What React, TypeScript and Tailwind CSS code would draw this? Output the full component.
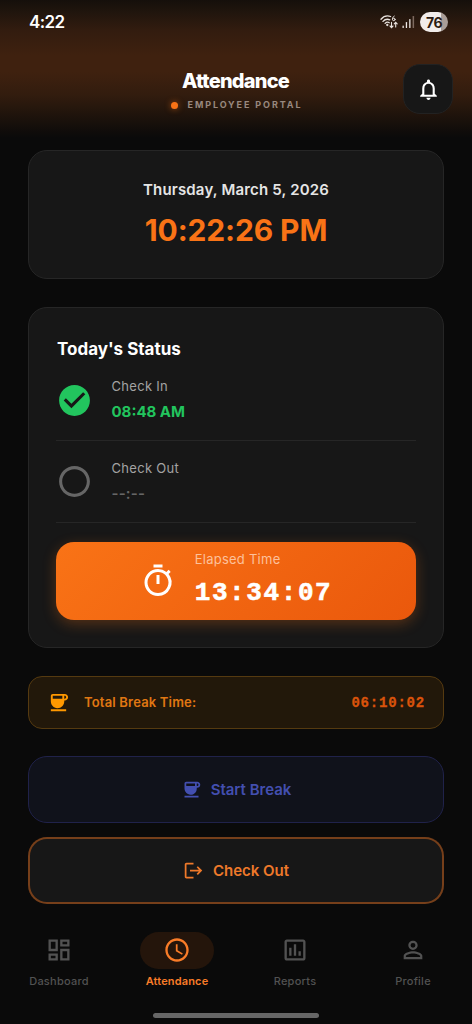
import React from 'react';
import type { IconType } from 'react-icons';
import {
  MdAccessTime,
  MdCheckCircle,
  MdCoffee,
  MdLogout,
  MdNotificationsNone,
  MdOutlineAssessment,
  MdOutlineDashboard,
  MdOutlineTimer,
  MdPersonOutline,
  MdRadioButtonUnchecked,
} from 'react-icons/md';

interface NavItem {
  label: string;
  icon: IconType;
  active?: boolean;
}

const NAV_ITEMS: NavItem[] = [
  { label: 'Dashboard', icon: MdOutlineDashboard },
  { label: 'Attendance', icon: MdAccessTime, active: true },
  { label: 'Reports', icon: MdOutlineAssessment },
  { label: 'Profile', icon: MdPersonOutline },
];

const StatusBar: React.FC = () => (
  <div className="flex h-11 items-center justify-between pl-[29px] pr-6">
    <span className="pt-0.5 text-[17px] font-semibold tracking-[-0.6px] text-white">4:22</span>
    <div className="flex items-center">
      {/* Wi-Fi 6 with traffic arrows */}
      <svg width="18" height="14" viewBox="0 0 18 14" fill="none" stroke="#e8e2de" strokeWidth="1.3" strokeLinecap="round">
        <path d="M1 4.2C3.6 1.2 7.4.4 10.6 1.5" />
        <path d="M3 6.4c1.8-2 4.4-2.6 6.8-1.6" />
        <path d="M5.1 8.4c1.2-1.2 2.8-1.5 4.2-.7" />
        <circle cx="7.3" cy="10" r=".5" />
        <path strokeWidth="1" d="M14.2 1.1c-1.2.6-1.8 1.7-1.8 3" />
        <circle strokeWidth="1" cx="13.8" cy="4.4" r="1.3" />
        <path strokeWidth="1.1" d="M11.5 7.4v5M10 11l1.5 1.6L13 11M15.7 12V7.4m-1.5 1.5 1.5-1.6 1.5 1.6" />
      </svg>
      <svg className="ml-1 mr-[5px]" width="13" height="14" viewBox="0 0 13 14">
        <rect x="0.5" y="10.5" width="1.3" height="2.5" rx=".6" fill="#eee8e4" />
        <rect x="3.8" y="7" width="1.3" height="6" rx=".6" fill="#eee8e4" />
        <rect x="7.2" y="4" width="1.3" height="9" rx=".6" fill="#eee8e4" />
        <rect x="10.6" y="1" width="1.5" height="12" rx=".6" fill="#7d6a5f" />
      </svg>
      <div className="flex h-5 w-7 items-center justify-center rounded-full bg-linear-to-r from-[#f1ecea] from-75% to-[#a99d97] to-75% text-[14px] font-bold tracking-[-0.4px] text-[#2b1a10]">
        76
      </div>
    </div>
  </div>
);

const Header: React.FC = () => (
  <header className="h-[138px] bg-[linear-gradient(to_bottom,#150f0b_0px,#20150d_12px,#321c0f_30px,#3f210f_55px,#3f210f_72px,#321c0e_95px,#20140c_114px,#0f0c0a_132px,#0a0a0a_138px)]">
    <StatusBar />
    <div className="grid grid-cols-[68px_1fr_69px] items-start pt-5">
      <div />
      <div className="flex flex-col items-center pt-[5px]">
        <h1 className="text-[20px] leading-6 font-extrabold tracking-[-0.8px] text-white">Attendance</h1>
        <div className="mt-1 flex items-center pl-0.5">
          <span className="mr-[10px] size-[7px] rounded-full bg-[#f97316] shadow-[0_0_6px_rgba(249,115,22,0.6)]" />
          <span className="text-[9px] leading-4 font-bold tracking-[1.9px] text-[#98887f]">EMPLOYEE PORTAL</span>
        </div>
      </div>
      <button className="flex size-[50px] items-center justify-center rounded-[17px] border border-[#222222] bg-[#171717] text-white">
        <MdNotificationsNone size={25} />
      </button>
    </div>
  </header>
);

interface StatusRowProps {
  label: string;
  value: string;
  done?: boolean;
}

const StatusRow: React.FC<StatusRowProps> = ({ label, value, done }) => (
  <div className="flex h-[82px] items-center border-b border-[#262626] first:h-[81px]">
    {done ? (
      <MdCheckCircle size={37} className="text-[#22c55e]" />
    ) : (
      <MdRadioButtonUnchecked size={37} className="text-[#666666]" />
    )}
    <div className="ml-[18.5px]">
      <div className="text-[13px] leading-5 tracking-[0.3px] text-[#a3a3a3]">{label}</div>
      <div
        className={
          done
            ? 'mt-1 text-[15px] leading-6 font-bold text-[#22c55e]'
            : 'mt-1 text-[15px] leading-6 font-semibold tracking-[0.2px] text-[#666666]'
        }
      >
        {value}
      </div>
    </div>
  </div>
);

const BottomNav: React.FC = () => (
  <nav className="mt-7 grid grid-cols-4">
    {NAV_ITEMS.map(({ label, icon: Icon, active }) => (
      <div key={label} className={`flex flex-col items-center ${active ? 'text-[#f97c28]' : 'text-[#525252]'}`}>
        <div className={`flex h-[37px] w-[74px] items-center justify-center rounded-full ${active ? 'bg-[#24150b]' : ''}`}>
          <Icon size={28} className="-mt-px" />
        </div>
        <span className={`mt-1 text-[11px] leading-4 ${active ? 'font-semibold tracking-[0.15px]' : 'font-medium tracking-[0.25px]'}`}>
          {label}
        </span>
      </div>
    ))}
  </nav>
);

export default function App() {
  return (
    <div className="flex h-[1024px] w-[472px] flex-col overflow-hidden bg-[#0a0a0a] font-['Inter',sans-serif]">
      <Header />

      <main className="px-7 pt-3">
        {/* Clock */}
        <section className="flex h-[129px] flex-col items-center rounded-[19px] border border-[#262626] bg-[#171717] pt-[29px]">
          <div className="text-[15px] leading-5 font-semibold tracking-[0.18px] text-[#e5e5e5]">Thursday, March 5, 2026</div>
          <div className="mt-3 text-[30px] leading-9 font-bold tracking-[-0.12px] text-[#f97316]">10:22:26 PM</div>
        </section>

        {/* Today's status */}
        <section className="mt-7 h-[341px] rounded-[19px] border border-[#262626] bg-[#171717] px-[27px] pt-[29px]">
          <h2 className="pl-px text-[17px] leading-6 font-bold text-white">Today's Status</h2>
          <div className="-mt-px">
            <StatusRow label="Check In" value="08:48 AM" done />
            <StatusRow label="Check Out" value="--:--" />
          </div>
          <div className="mt-[19px] flex h-[78px] items-center justify-center rounded-[18px] bg-linear-[135deg] from-[#f97316] to-[#ea580c] shadow-[0_4px_14px_rgba(249,115,22,0.28)]">
            <MdOutlineTimer size={36} className="text-white" />
            <div className="mb-0.5 ml-[19px]">
              <div className="text-[13px] leading-4 tracking-[0.25px] text-[#fdc19b]">Elapsed Time</div>
              <div className="mt-2 pt-0.5 font-['Liberation_Mono',monospace] text-[26px] leading-8 font-bold tracking-[1.6px] text-white [-webkit-text-stroke:0.6px_white]">
                13:34:07
              </div>
            </div>
          </div>
        </section>

        {/* Break summary */}
        <section className="mt-7 flex h-[53px] items-center rounded-[14px] border border-[#553a10] bg-[#22180a] pr-[18px] pl-[18px]">
          <MdCoffee size={23} className="text-[#ff9800]" />
          <span className="ml-[14px] flex-1 text-[13px] font-semibold tracking-[0.18px] text-[#e07712]">Total Break Time:</span>
          <span className="pt-0.5 font-['Liberation_Mono',monospace] text-[14px] font-bold tracking-[0.8px] text-[#d9530b] [-webkit-text-stroke:0.3px_#d9530b]">
            06:10:02
          </span>
        </section>

        <button className="mt-[27px] flex h-[67px] w-full items-center justify-center rounded-[19px] border border-[#20224a] bg-[#10121b] text-[#434fb0]">
          <MdCoffee size={21} />
          <span className="ml-[9px] pt-px text-[15px] font-semibold">Start Break</span>
        </button>

        <button className="mt-[14px] flex h-[67px] w-full items-center justify-center rounded-[19px] border-2 border-[#8f4a1b]/80 bg-[#171717] text-[#ee792a]">
          <MdLogout size={21} />
          <span className="ml-[9px] pt-px text-[15px] font-semibold">Check Out</span>
        </button>
      </main>

      <BottomNav />

      <div className="mx-auto mt-6 h-[5px] w-[166px] rounded-full bg-[#666666]" />
    </div>
  );
}
